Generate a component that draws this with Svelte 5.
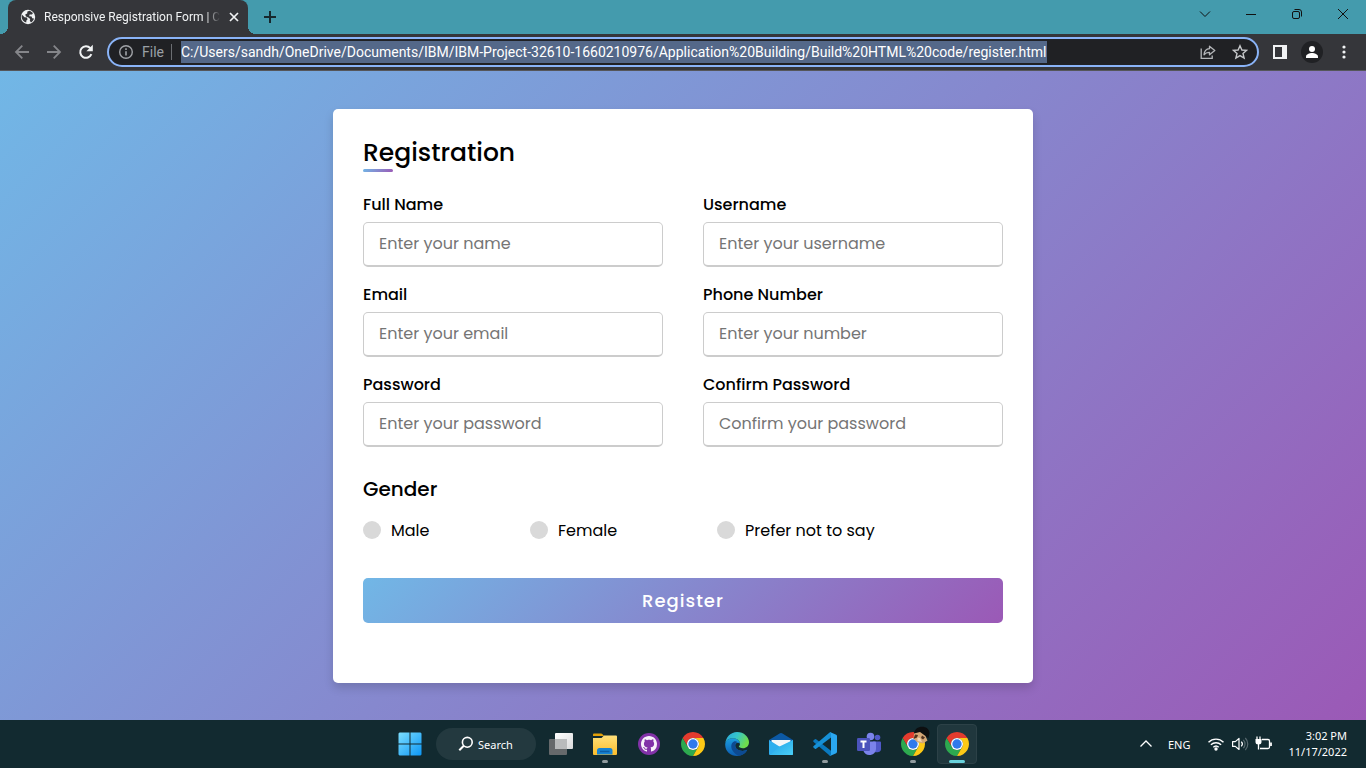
<script>
  const url = 'C:/Users/sandh/OneDrive/Documents/IBM/IBM-Project-32610-1660210976/Application%20Building/Build%20HTML%20code/register.html';

  const fields = [
    { id: 'full-name', label: 'Full Name', hint: 'Enter your name', type: 'text' },
    { id: 'username', label: 'Username', hint: 'Enter your username', type: 'text' },
    { id: 'email', label: 'Email', hint: 'Enter your email', type: 'text' },
    { id: 'phone', label: 'Phone Number', hint: 'Enter your number', type: 'text' },
    { id: 'password', label: 'Password', hint: 'Enter your password', type: 'password' },
    { id: 'confirm', label: 'Confirm Password', hint: 'Confirm your password', type: 'password' }
  ];

  const genders = ['Male', 'Female', 'Prefer not to say'];
</script>

{#snippet chromeLogo()}
  <path fill="#e33b2e" d="M22.39 6A12 12 0 0 0 1.61 6L6.8 15A6 6 0 0 1 12 6Z" />
  <path fill="#2da94f" d="M1.61 6A12 12 0 0 0 12 24L17.2 15A6 6 0 0 1 6.8 15Z" />
  <path fill="#fdc916" d="M12 24A12 12 0 0 0 22.39 6L12 6A6 6 0 0 1 17.2 15Z" />
  <circle cx="12" cy="12" r="6" fill="#fff" />
  <circle cx="12" cy="12" r="4.7" fill="#3079ec" />
{/snippet}

<div class="screen">
  <header class="titlebar">
    <div class="tab">
      <svg width="16" height="16" viewBox="0 0 16 16" aria-hidden="true">
        <circle cx="8" cy="8" r="7.2" fill="#f1f3f4" />
        <path fill="#35363a" d="M1.8 5.6 4.6 8.2 6.8 8.6 7.6 10.2 6.4 11.4 6.2 13.6C3.6 12.8 1.8 10.6 1.6 8ZM7.4 2.4 9.8 1.8 13 4 12 5.6 9.6 5.4 9.2 7.2 11.6 7.6 12.2 9.2 14 9.4C13.6 11 12.4 12.6 11 13.4L9.8 11.8 10.2 10 8.4 8.4 6 7.4 5.2 5.4 7.2 4.6Z" />
      </svg>
      <span class="tab-title">Responsive Registration Form | C</span>
      <button class="tab-close" aria-label="Close tab">
        <svg width="10" height="10" viewBox="0 0 10 10"><path d="M1 1l8 8M9 1L1 9" stroke="#f1f3f4" stroke-width="1.7" /></svg>
      </button>
    </div>
    <button class="new-tab" aria-label="New tab">
      <svg width="14" height="14" viewBox="0 0 14 14"><path d="M7 1v12M1 7h12" stroke="#17282d" stroke-width="2" /></svg>
    </button>
    <div class="window-controls">
      <button aria-label="Search tabs"><svg width="12" height="12" viewBox="0 0 12 12"><path d="M1 3.5l5 5 5-5" fill="none" stroke="#111" /></svg></button>
      <button aria-label="Minimize"><svg width="12" height="12" viewBox="0 0 12 12"><path d="M1 6.5h10" stroke="#111" /></svg></button>
      <button aria-label="Restore"><svg width="12" height="12" viewBox="0 0 12 12" fill="none" stroke="#111"><rect x="1.5" y="3.5" width="7" height="7" rx="1.5" /><path d="M3.5 1.5h4.500a2.500 2.500 0 0 1 2.500 2.500v4.500" /></svg></button>
      <button aria-label="Close"><svg width="12" height="12" viewBox="0 0 12 12"><path d="M1 1l10 10M11 1L1 11" stroke="#111" /></svg></button>
    </div>
  </header>

  <nav class="toolbar" aria-label="Browser toolbar">
    <button aria-label="Back"><svg width="16" height="16" viewBox="0 0 16 16" fill="none" stroke="#85868a" stroke-width="1.8"><path d="M15 8H2.200M8.300 1.700L2 8l6.300 6.300" /></svg></button>
    <button aria-label="Forward"><svg width="16" height="16" viewBox="0 0 16 16" fill="none" stroke="#85868a" stroke-width="1.8"><path d="M1 8h12.800M7.700 1.700L14 8l-6.300 6.300" /></svg></button>
    <button aria-label="Reload"><svg width="16" height="16" viewBox="0 0 16 16"><path d="M13.400 10.200A5.800 5.800 0 1 1 12.300 4.100" fill="none" stroke="#f1f3f4" stroke-width="2" /><path d="M14.800 0.800V7.200H8.400Z" fill="#f1f3f4" /></svg></button>
    <div class="omnibox">
      <svg class="info" width="16" height="16" viewBox="0 0 16 16" aria-hidden="true"><circle cx="8" cy="8" r="6.300" fill="none" stroke="#a0a3a7" stroke-width="1.400" /><path d="M8 7.200v4.300M8 4.300v1.600" stroke="#a0a3a7" stroke-width="1.600" /></svg>
      <label for="address">File</label>
      <input id="address" type="text" value={url} spellcheck="false" />
      <div class="page-actions">
        <button aria-label="Share"><svg width="16" height="16" viewBox="0 0 16 16" fill="none" stroke="#b4b6b9" stroke-width="1.300"><path d="M1.200 4.500V14.300H12.200V11.500" /><path d="M9.500 2.200L14.800 6.500 9.500 10.800V8.300C7 8.200 5.300 9 4 10.800 4.300 7.300 6.200 5 9.500 4.700Z" stroke-linejoin="round" /></svg></button>
        <button aria-label="Bookmark"><svg width="16" height="16" viewBox="0 0 16 16"><path d="M8 1.800L9.900 6 14.500 6.400 11 9.500 12.100 14 8 11.600 3.900 14 5 9.500 1.500 6.400 6.100 6Z" fill="none" stroke="#c6c8ca" stroke-width="1.400" /></svg></button>
      </div>
    </div>
    <button aria-label="Side panel"><svg width="14" height="14" viewBox="0 0 14 14"><path fill="#f1f3f4" fill-rule="evenodd" d="M0 0H14V14H0ZM2 2V12H9V2Z" /></svg></button>
    <button aria-label="Profile"><svg width="22" height="22" viewBox="0 0 22 22"><circle cx="11" cy="11" r="11" fill="#202124" /><circle cx="11" cy="8" r="3" fill="#fff" /><path d="M5 17v-1.500C5 13.300 8.500 12 11 12s6 1.300 6 3.500V17Z" fill="#fff" /></svg></button>
    <button aria-label="Menu"><svg width="4" height="14" viewBox="0 0 4 14" fill="#f1f3f4"><circle cx="2" cy="2" r="1.600" /><circle cx="2" cy="7" r="1.600" /><circle cx="2" cy="12" r="1.600" /></svg></button>
  </nav>

  <main>
    <div class="card">
      <h1>Registration</h1>
      <form onsubmit={(e) => e.preventDefault()}>
        <div class="fields">
          {#each fields as field}
            <div class="field">
              <label for={field.id}>{field.label}</label>
              <input id={field.id} type={field.type} placeholder={field.hint} />
            </div>
          {/each}
        </div>
        <fieldset>
          <legend>Gender</legend>
          <div class="options">
            {#each genders as gender}
              <label><input type="radio" name="gender" value={gender} />{gender}</label>
            {/each}
          </div>
        </fieldset>
        <button class="submit" type="submit">Register</button>
      </form>
    </div>
  </main>

  <footer class="taskbar">
    <div class="apps">
      <button class="app" aria-label="Start">
        <svg width="24" height="24" viewBox="0 0 24 24">
          <defs><linearGradient id="win" x1="0" y1="0" x2="24" y2="24" gradientUnits="userSpaceOnUse"><stop offset="0" stop-color="#7fe0ff" /><stop offset="1" stop-color="#0a95f5" /></linearGradient></defs>
          <path fill="url(#win)" d="M1.500.500H11.500V11.500H.500V1.500ZM12.500.500H22.500L23.500 1.500V11.500H12.500ZM.500 12.500H11.500V23.500H1.500L.500 22.500ZM12.500 12.500H23.500V22.500L22.500 23.500H12.500Z" />
        </svg>
      </button>
      <button class="search">
        <svg width="16" height="16" viewBox="0 0 16 16" fill="none" stroke="#fff" stroke-width="1.600" aria-hidden="true"><circle cx="9.300" cy="6.300" r="4.900" /><path d="M5.800 9.800L1.300 14.300" stroke-width="2" /></svg>
        Search
      </button>
      <button class="app" aria-label="Task view">
        <svg width="24" height="24" viewBox="0 0 24 24">
          <defs><linearGradient id="tv" x1="0" y1="0" x2="1" y2="1"><stop offset="0" stop-color="#fff" /><stop offset="1" stop-color="#d9dadb" /></linearGradient></defs>
          <rect x="0" y="7" width="18" height="16" rx="1" fill="#66696b" />
          <rect x="6" y="1" width="18" height="16" rx="1" fill="url(#tv)" />
          <rect x="6" y="7" width="12" height="10" fill="#b9bbbc" />
        </svg>
      </button>
      <button class="app open" aria-label="File Explorer">
        <svg width="26" height="24" viewBox="0 0 26 24">
          <defs><linearGradient id="fold" x1="0" y1="0" x2="0" y2="1"><stop offset="0" stop-color="#ffe07a" /><stop offset="1" stop-color="#fbbd2b" /></linearGradient></defs>
          <path d="M1 2.500Q1 1.500 2 1.500H9Q10 1.500 10.500 2.200L12 4H1Z" fill="#e3a008" />
          <path d="M1 6H9.500L12 3.500H24Q25 3.500 25 4.500V22Q25 23 24 23H2Q1 23 1 22Z" fill="url(#fold)" />
          <path d="M5 22.500V18.500Q5 16 7.500 16H18Q20.500 16 20.500 18.500V22.500Z" fill="#1683d2" />
          <path d="M8 19.500H17.500" stroke="#0b5da5" stroke-width="1.500" />
        </svg>
      </button>
      <button class="app" aria-label="GitHub Desktop">
        <svg width="22" height="22" viewBox="0 0 22 22">
          <circle cx="11" cy="11" r="11" fill="#8232a8" />
          <path transform="translate(3 3)" fill="#f7f2fa" d="M8 0C3.580 0 0 3.580 0 8c0 3.540 2.290 6.530 5.470 7.590.400.070.550-.170.550-.380 0-.190-.010-.820-.010-1.490-2.010.370-2.530-.490-2.690-.940-.090-.230-.480-.940-.820-1.130-.280-.150-.680-.520-.010-.530.630-.010 1.080.580 1.230.820.720 1.210 1.870.870 2.330.660.070-.520.280-.870.510-1.070-1.780-.200-3.640-.890-3.640-3.950 0-.870.310-1.590.820-2.150-.080-.200-.360-1.020.080-2.120 0 0 .670-.210 2.200.820.640-.180 1.320-.270 2-.270s1.360.090 2 .270c1.530-1.040 2.200-.820 2.200-.820.440 1.100.160 1.920.080 2.120.510.560.820 1.270.820 2.150 0 3.070-1.870 3.750-3.650 3.950.290.250.540.730.540 1.480 0 1.070-.010 1.930-.010 2.200 0 .210.150.460.550.380A8.010 8.010 0 0 0 16 8c0-4.420-3.580-8-8-8Z" />
        </svg>
      </button>
      <button class="app" aria-label="Chrome"><svg width="24" height="24" viewBox="0 0 24 24">{@render chromeLogo()}</svg></button>
      <button class="app" aria-label="Edge">
        <svg width="24" height="24" viewBox="0 0 24 24">
          <defs>
            <linearGradient id="edgeTop" x1="0" y1="0" x2="1" y2=".4"><stop offset="0" stop-color="#2aa5de" /><stop offset=".5" stop-color="#35c5cc" /><stop offset="1" stop-color="#6fdc4b" /></linearGradient>
            <linearGradient id="edgeLeft" x1="0" y1="0" x2="0" y2="1"><stop offset="0" stop-color="#1b9de0" /><stop offset="1" stop-color="#0c5bb0" /></linearGradient>
          </defs>
          <path fill="url(#edgeLeft)" d="M.300 11.500C1 8 4.500 6.200 8 6.200c4 0 7 2.300 7 5.600-1.200-1.700-4.800-1.700-4.800 1.700 0 4.500 6.800 7 12 4.300C20.300 21.800 16.500 24 12 24 5.300 24-.600 18.500.300 11.500Z" />
          <path fill="#0d4a92" d="M9 9.500C6 11 5.500 15 7.500 18.500c1.500 2.700 3.800 4.300 6.500 5.300 3.700-.600 6.600-2.700 8.200-6-5 2.700-12 .200-12-4.300 0-2 1.200-3 2.300-3.200C11.500 9.300 10.200 9 9 9.500Z" />
          <path fill="url(#edgeTop)" d="M.300 11.500C.800 5 5.800 0 12 0c7 0 12 5 12 10.200 0 3.800-2.800 6-6 6-2.500 0-4.200-.900-4.200-1.600 0-.500 1.200-1 1.200-2.800C15 8.500 12 6.200 8 6.200 4.500 6.200 1 8 .300 11.500Z" />
        </svg>
      </button>
      <button class="app" aria-label="Mail">
        <svg width="24" height="24" viewBox="0 0 24 24">
          <defs><linearGradient id="mail" x1="0" y1="0" x2="1" y2="1"><stop offset="0" stop-color="#1e9de5" /><stop offset="1" stop-color="#4bd0f7" /></linearGradient></defs>
          <path fill="#0c59a4" d="M0 8L11 1.300Q12 .700 13 1.300L24 8V14H0Z" />
          <path fill="#f4f6f8" d="M2.500 8H21.500V16H2.500Z" />
          <path fill="#2faeee" d="M0 8L12 15.500 24 8V22Q24 23 23 23H1Q0 23 0 22Z" />
          <path fill="url(#mail)" d="M24 8V22Q24 23 23 23H1L10.500 14.600Z" />
        </svg>
      </button>
      <button class="app open" aria-label="Visual Studio Code">
        <svg width="24" height="24" viewBox="0 0 24 24">
          <path fill="#0a79bf" d="M.400 8.600L1.900 7.200Q2.500 6.800 3.100 7.200L18 18.800V23.800Q17 24 16.300 23.300L.400 9.800Q0 9.200.400 8.600Z" />
          <path fill="#1690d6" d="M.400 15.400L1.900 16.800Q2.500 17.200 3.100 16.800L18 5.400V.200Q17 0 16.300.700L.400 14.200Q0 14.800.400 15.400Z" />
          <path fill="#2aa7f0" d="M17.500.200L23.200 2.800Q24 3.200 24 4.200V19.800Q24 20.800 23.200 21.200L17.500 23.800Q16.800 24 16.300 23.300 18 24.200 18 22V2Q18-.200 16.300.700 16.800 0 17.500.200Z" />
        </svg>
      </button>
      <button class="app" aria-label="Teams">
        <svg width="26" height="24" viewBox="0 0 26 24">
          <circle cx="21.500" cy="5.500" r="2.800" fill="#5059c9" />
          <path fill="#5059c9" d="M17 9.500H24Q25 9.500 25 10.500V15.500A4 4 0 0 1 17 17Z" />
          <circle cx="14.500" cy="4.500" r="3.800" fill="#7b83eb" />
          <path fill="#7b83eb" d="M9 9.500H19Q20 9.500 20 10.500V17A6.500 6.500 0 0 1 7.500 19Z" />
          <rect x="1" y="6" width="13" height="13" rx="1.200" fill="#4b53bc" />
          <path d="M4.500 9.500H10.500M7.500 9.500V16" stroke="#fff" stroke-width="2" />
        </svg>
      </button>
      <button class="app open" aria-label="Chrome, second profile">
        <svg class="badged" width="30" height="30" viewBox="0 0 30 30">
          <g transform="translate(3 3)">{@render chromeLogo()}</g>
          <path fill="#0d0f10" d="M16 5C16-4 31-5 31.500 4L30.500 9 24 6Z" />
          <path fill="#d5a877" d="M16 4.500L22 3 27.500 7 29.500 11.500 25 14.500 19 13 15.500 9.500Z" />
          <path fill="#51321f" d="M17 5.500L20 6 19 8.500 15.500 10ZM24 6.500L27 8.500 25 10.500 23 9Z" />
          <path fill="#f2d5b4" d="M19.500 8.500L22 9 24 13 19.500 12Z" />
        </svg>
      </button>
      <button class="app open current" aria-label="Chrome, current window"><svg width="24" height="24" viewBox="0 0 24 24">{@render chromeLogo()}</svg></button>
    </div>
    <div class="tray">
      <button aria-label="Show hidden icons"><svg width="14" height="14" viewBox="0 0 14 14"><path d="M1.500 9.500L7 4l5.500 5.500" fill="none" stroke="#fff" stroke-width="1.300" /></svg></button>
      <button class="lang">ENG</button>
      <button class="status" aria-label="Network, sound and battery">
        <svg width="18" height="16" viewBox="0 0 18 16" fill="none" stroke="#fff" stroke-width="1.400"><path d="M1.500 6.300a10.500 10.500 0 0 1 15 0M3.900 8.800a7.200 7.200 0 0 1 10.200 0M6.300 11.200a3.900 3.900 0 0 1 5.400 0" /><circle cx="9" cy="13" r="1" fill="#fff" /></svg>
        <svg width="18" height="16" viewBox="0 0 18 16" fill="none" stroke="#fff" stroke-width="1.200"><path d="M1.600 5.600H4.300L8 2.500V13.500L4.300 10.400H1.600Z" stroke-linejoin="round" /><path d="M10.300 5.700a3.300 3.300 0 0 1 0 4.600" /><path d="M12.300 3.800a6 6 0 0 1 0 8.400M14.300 2a8.500 8.500 0 0 1 0 12" stroke="#58696e" /></svg>
        <svg width="18" height="16" viewBox="0 0 18 16" fill="none" stroke="#fff" stroke-width="1.300"><path d="M7 3.500H13Q14.500 3.500 14.500 5V11Q14.500 12.500 13 12.500H5" /><path d="M16 6.500v3.500" stroke-width="1.800" /><path d="M2 .500V4M5 .500V4M3.500 8V13.500" /><path d="M.500 3H6.500V6Q6.500 8.500 3.500 8.500T.500 6Z" fill="#fff" stroke="none" /></svg>
      </button>
      <button class="clock"><span>3:02 PM</span><span>11/17/2022</span></button>
    </div>
  </footer>
</div>

<style>
  :global(body) {
    margin: 0;
  }

  * {
    box-sizing: border-box;
  }

  .screen {
    display: flex;
    flex-direction: column;
    min-height: 100vh;
    font-family: 'Noto Sans', 'Open Sans', sans-serif;
    font-size: 11px;
  }

  button {
    padding: 0;
    border: 0;
    background: none;
    color: inherit;
    font: inherit;
    cursor: pointer;
  }

  svg {
    display: block;
    flex: none;
  }

  .titlebar {
    display: flex;
    height: 34px;
    padding-left: 8px;
    background: #449bad;
  }

  .tab {
    position: relative;
    display: flex;
    align-items: center;
    gap: 8px;
    width: 240px;
    padding: 0 8px 0 12px;
    border-radius: 8px 8px 0 0;
    background: #35363a;
    color: #f1f3f4;
    font-family: Roboto, sans-serif;
    font-size: 12px;
  }

  .tab::before,
  .tab::after {
    content: '';
    position: absolute;
    bottom: 0;
    width: 8px;
    height: 8px;
  }

  .tab::before {
    right: 100%;
    background: radial-gradient(circle at 0 0, transparent 8px, #35363a 8px);
  }

  .tab::after {
    left: 100%;
    background: radial-gradient(circle at 100% 0, transparent 8px, #35363a 8px);
  }

  .tab-title {
    flex: 1;
    white-space: nowrap;
    mask-image: linear-gradient(to right, #000 162px, transparent);
  }

  .tab-close,
  .new-tab,
  .window-controls button,
  .toolbar button {
    display: grid;
    place-items: center;
  }

  .tab-close {
    width: 16px;
    height: 16px;
  }

  .new-tab {
    width: 28px;
    margin-left: 8px;
  }

  .window-controls {
    display: flex;
    height: 28px;
    margin-left: auto;
  }

  .window-controls button {
    width: 46px;
  }

  .toolbar {
    display: flex;
    align-items: center;
    height: 37px;
    padding: 0 6px;
    border-bottom: 1px solid #55565a;
    background: #35363a;
  }

  .toolbar button {
    flex: none;
    width: 32px;
    height: 28px;
  }

  .omnibox {
    display: flex;
    flex: 1;
    align-items: center;
    min-width: 0;
    height: 30px;
    margin: 0 5px;
    padding: 0 1px 0 9px;
    border: 2px solid #8ab4f8;
    border-radius: 15px;
    background: #202124;
    color: #9aa0a6;
    font-family: Roboto, sans-serif;
    font-size: 14px;
  }

  .omnibox label {
    margin-right: 9px;
    margin-left: 8px;
    padding-right: 7px;
    border-right: 1px solid #6b6e72;
    line-height: 16px;
  }

  .omnibox input {
    field-sizing: content;
    min-width: 0;
    height: 22px;
    padding: 0;
    border: 0;
    outline: 0;
    background: #546889;
    color: #fff;
    font: inherit;
  }

  .page-actions {
    display: flex;
    margin-left: auto;
  }

  main {
    display: flex;
    flex: 1;
    align-items: center;
    justify-content: center;
    padding: 10px;
    background: linear-gradient(135deg, #71b7e6, #9b59b6);
    color: #000;
    font-family: Poppins, Inter, sans-serif;
    font-size: 16px;
    line-height: 24px;
  }

  .card {
    width: 100%;
    max-width: 700px;
    padding: 25px 30px;
    border-radius: 5px;
    background: #fff;
    box-shadow: 0 5px 10px rgba(0, 0, 0, 0.15);
  }

  h1 {
    position: relative;
    margin: 0 0 21px;
    font-size: 25px;
    font-weight: 500;
    line-height: 38px;
  }

  h1::before {
    content: '';
    position: absolute;
    bottom: 0;
    left: 0;
    width: 30px;
    height: 3px;
    border-radius: 5px;
    background: linear-gradient(135deg, #71b7e6, #9b59b6);
  }

  .fields {
    display: grid;
    grid-template-columns: 1fr 1fr;
    gap: 16px 40px;
  }

  .field {
    display: flex;
    flex-direction: column;
    gap: 5px;
    font-weight: 500;
  }

  .field input {
    width: 100%;
    height: 45px;
    padding: 0 15px;
    border: 1px solid #ccc;
    border-bottom-width: 2px;
    border-radius: 5px;
    outline: 0;
    background: #fff;
    color: #000;
    font: inherit;
    font-weight: 400;
  }

  .field input::placeholder {
    color: #757575;
  }

  fieldset {
    min-width: 0;
    margin: 27px 0 35px;
    padding: 0;
    border: 0;
  }

  legend {
    padding: 0;
    font-size: 20px;
    font-weight: 500;
    line-height: 30px;
  }

  .options {
    display: grid;
    grid-template-columns: 167px 187px auto;
    margin-top: 14px;
    line-height: 25px;
  }

  .options label {
    display: flex;
    align-items: center;
    gap: 10px;
  }

  .options input {
    width: 18px;
    height: 18px;
    margin: 0;
    border-radius: 50%;
    appearance: none;
    background: #d9d9d9;
  }

  .options input:checked {
    border: 3px solid #d9d9d9;
    background: #9b59b6;
  }

  .submit {
    display: block;
    width: 100%;
    height: 45px;
    margin-bottom: 35px;
    padding-top: 2px;
    border-radius: 5px;
    background: linear-gradient(135deg, #71b7e6, #9b59b6);
    color: #fff;
    font-size: 18px;
    font-weight: 500;
    letter-spacing: 1px;
  }

  .taskbar {
    display: grid;
    grid-template-columns: 1fr auto 1fr;
    align-items: center;
    height: 48px;
    background: #122a30;
    color: #fff;
  }

  .apps {
    display: flex;
    grid-column: 2;
    gap: 4px;
  }

  .app {
    position: relative;
    display: grid;
    place-items: center;
    width: 40px;
    height: 40px;
    border-radius: 4px;
  }

  .badged {
    overflow: visible;
  }

  .search {
    display: flex;
    align-items: center;
    justify-content: center;
    gap: 4px;
    width: 100px;
    height: 32px;
    margin: 4px 1px 0 2px;
    border-radius: 16px;
    background: #23393f;
  }

  .open::after {
    content: '';
    position: absolute;
    bottom: 1px;
    left: 50%;
    width: 6px;
    height: 3px;
    border-radius: 2px;
    background: #929c9f;
    transform: translateX(-50%);
  }

  .current {
    border: 1px solid #2c4147;
    background: #20373d;
  }

  .current::after {
    bottom: 0;
    width: 16px;
    background: #69d2dc;
  }

  .tray {
    display: flex;
    align-items: center;
    justify-content: flex-end;
    padding-right: 19px;
  }

  .lang {
    margin: 0 17px 0 15px;
  }

  .status {
    display: flex;
    gap: 6px;
    margin-right: 15px;
  }

  .clock {
    display: flex;
    flex-direction: column;
    align-items: flex-end;
    line-height: 16px;
  }
</style>
